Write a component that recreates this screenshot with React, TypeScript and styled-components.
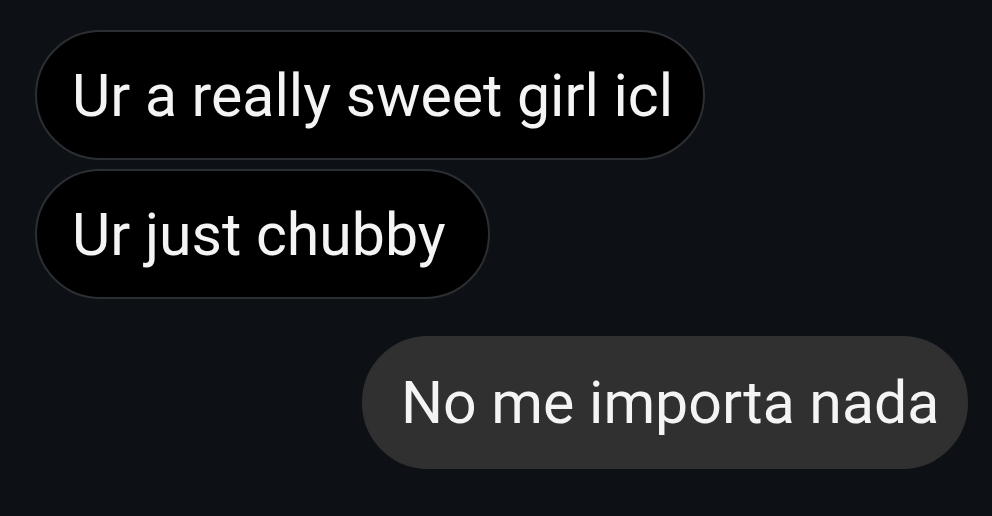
import React from "react";
import styled, { createGlobalStyle } from "styled-components";

const Global = createGlobalStyle`
  html, body { margin: 0; padding: 0; background: #0d1115; }
  body { width: 992px; height: 516px; overflow: hidden; font-family: Roboto, "Noto Sans", sans-serif; }
`;

const Thread = styled.div`
  display: flex;
  flex-direction: column;
  padding: 30px 24px 0 35px;
  gap: 9px;
`;

const Bubble = styled.div<{ $mine?: boolean; $width: number }>`
  align-self: ${(p) => (p.$mine ? "flex-end" : "flex-start")};
  box-sizing: border-box;
  width: ${(p) => p.$width}px;
  height: ${(p) => (p.$mine ? 133 : 130)}px;
  display: flex;
  align-items: center;
  padding: 0 0 0 ${(p) => (p.$mine ? 37 : 35)}px;
  border-radius: 66px;
  background: ${(p) => (p.$mine ? "#303030" : "#000")};
  border: 2px solid ${(p) => (p.$mine ? "#303030" : "#2b2f34")};
  color: #f4f4f4;
  font-size: 59px;
  white-space: nowrap;
  margin-top: ${(p) => (p.$mine ? 28 : 0)}px;
`;

export default function App() {
  return (
    <>
      <Global />
      <Thread>
        <Bubble $width={670}>Ur a really sweet girl icl</Bubble>
        <Bubble $width={455}>Ur just chubby</Bubble>
        <Bubble $mine $width={606}>No me importa nada</Bubble>
      </Thread>
    </>
  );
}
